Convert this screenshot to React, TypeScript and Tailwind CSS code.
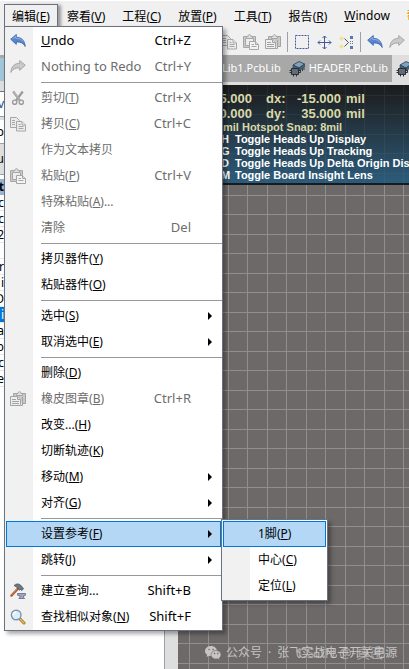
import {Fragment, type ReactNode} from 'react'

type Item = {
    label: string
    hotkey?: string
    tail?: string
    keys?: string
    icon?: ReactNode
    disabled?: boolean
    submenu?: boolean
    active?: boolean
    latin?: boolean
}

const UndoIcon = () => (
    <svg className="w-4 h-4" viewBox="0 0 16 16">
        <path d="M.7 6.2 6.3 1.5v2.8c5 .1 8.4 2.6 8.9 9.2-1.7-3.3-4.3-4.7-8.9-4.6v2.5z" fill="#5b84cf" stroke="#3560ad" strokeWidth=".8" strokeLinejoin="round"/>
        <path d="M2.4 6 5.6 3.4v1.8c3.6 0 6 1 7.6 3.4" fill="none" stroke="#9bb9ea" strokeWidth=".8"/>
    </svg>
)

const RedoIcon = () => (
    <svg className="w-4 h-4" viewBox="0 0 16 16">
        <path d="M15.3 6.2 9.7 1.5v2.8C4.7 4.4 1.3 6.9.8 13.5c1.7-3.3 4.3-4.7 8.9-4.6v2.5z" fill="#c9c9c9" stroke="#a3a3a3" strokeWidth=".9" strokeLinejoin="round"/>
    </svg>
)

const CutIcon = () => (
    <svg className="w-4 h-4" viewBox="0 0 16 16" fill="none" stroke="#9b9b9b">
        <path d="m3.2 1.5 6.7 9M12.8 1.5l-6.7 9" strokeWidth="2.2"/>
        <path d="m3.8 2 5.7 7.8" stroke="#cfcfcf" strokeWidth=".7"/>
        <circle cx="4.7" cy="12.2" r="2.1" strokeWidth="1.4"/>
        <circle cx="11.3" cy="12.2" r="2.1" strokeWidth="1.4"/>
    </svg>
)

const CopyIcon = () => (
    <svg className="w-4 h-4" viewBox="0 0 16 16" fill="#ebebeb" stroke="#a6a6a6">
        <path d="M.5 1.5h6l3 3v7h-9z"/>
        <path d="M2 4.5h3M2 6.5h3M2 8.5h3"/>
        <path d="M6.5 5.5H12L15.5 9v6h-9z"/>
        <path d="M12 5.5V9h3.5M8.5 8.5h2M8.5 10.5h5M8.5 12.5h5"/>
    </svg>
)

const PasteIcon = () => (
    <svg className="w-4 h-4" viewBox="0 0 16 16" fill="#dcdcdc" stroke="#a6a6a6">
        <path d="M.5 2.5h12v11H.5z" fill="#c9c9c9"/>
        <path d="M2.5 4.5h8v7h-8z" fill="#ececec"/>
        <path d="M3.5 3.5v-1H5c0-2.6 3-2.6 3 0h1.5v2h-6z"/>
        <path d="M6.5 7.500h6l3 3v5h-9z" fill="#f3f3f3"/>
        <path d="M8.5 10.500H11M8.5 12.500h5M12.5 7.500v3h3"/>
    </svg>
)

const StampIcon = () => (
    <svg className="w-4 h-4" viewBox="0 0 16 16" fill="#e2e2e2" stroke="#a3a3a3">
        <path d="M3.5 2.5h12v10h-12z" fill="#c9c9c9"/>
        <path d="M6.5 3.5v-1H8c0-2.400 3-2.400 3 0h1.5v2h-6z"/>
        <path d="M.5 5.5h7l3 3v6H.5z" fill="#efefef"/>
        <path d="M2 8.5h4M2 10.5h7M2 12.5h7M7.5 5.5v3h3M12.5 6v8.5h-2"/>
    </svg>
)

const HammerIcon = () => (
    <svg className="w-4 h-4" viewBox="0 0 16 16">
        <path d="m1.5 12.5 6.5-7" stroke="#a84e25" strokeWidth="2.4" strokeLinecap="round"/>
        <path d="m1.5 12 6-6.5" stroke="#e7a06c" strokeWidth=".8"/>
        <path d="M4 2.5C6 .5 8.5.4 10.5 2l3 3.500-1.500 2-1.500-1-1 .8L6.500 4z" fill="#6c7680" stroke="#444d55" strokeWidth=".7"/>
        <path d="M7.5 10.5h8v1.700l-2 .8v1.200l1.200 1.300H8.800l1.200-1.300V13l-2.500-.8z" fill="#9ea3c2" stroke="#646882" strokeWidth=".8"/>
    </svg>
)

const SearchIcon = () => (
    <svg className="w-4 h-4" viewBox="0 0 16 16">
        <path d="m10 10 4 4" stroke="#9b6b22" strokeWidth="3" strokeLinecap="round"/>
        <path d="m10 10 4 4" stroke="#f0bd50" strokeWidth="1.5" strokeLinecap="round"/>
        <circle cx="6.2" cy="6" r="4.8" fill="#d9eefb" stroke="#7d93ad" strokeWidth="1.4"/>
        <path d="M3.2 6a3 3 0 0 1 3-3" fill="none" stroke="#fff" strokeWidth="1.3"/>
    </svg>
)

const SelectIcon = () => (
    <svg className="w-4 h-4" viewBox="0 0 16 16">
        <path d="M1.5 1.5h13v13h-13z" fill="none" stroke="#4057a0" strokeDasharray="2 1"/>
    </svg>
)

const MoveIcon = () => (
    <svg className="w-4 h-4" viewBox="0 0 16 16" fill="none" stroke="#44589c">
        <path d="M8.5 2v13M2 8.5h13M6.5 4l2-2 2 2M6.5 13l2 2 2-2M4 6.5l-2 2 2 2M13 6.5l2 2-2 2"/>
    </svg>
)

const ClearFilterIcon = () => (
    <svg className="w-4 h-4" viewBox="0 0 16 16">
        <path d="M3.5 2v5M1 4.5h5M3.5 10v5M1 12.5h5M2 3l3 3m0-3L2 6m0 5 3 3m0-3-3 3" stroke="#eee59a"/>
        <path d="m6.5 4.5 4 4-4 4" fill="none" stroke="#555"/>
        <path d="M12 2h3v3h-3zM12 12h3v3h-3z" fill="#557cad"/>
        <path d="M12.5 7v3.500M14.5 7v3.500" stroke="#777" strokeDasharray="1 1"/>
    </svg>
)

const ChipIcon = () => (
    <svg className="w-4 h-4 shrink-0" viewBox="0 0 16 16">
        <path d="m4 4 6-3.5L15.5 3 10 7z" fill="#7ca4c2" stroke="#293b49" strokeWidth=".8"/>
        <path d="m4 4 6 3v3L4 7zM10 7l5.500-4v3L10 10z" fill="#496172" stroke="#293b49" strokeWidth=".6"/>
        <path d="M11.5 9v2.500M13.500 7.500V10M15 6.500V9" stroke="#2f3f4b"/>
        <path d="M2.5 7.500h7v6h-7z" fill="#626b75" stroke="#292e35"/>
        <path d="M.5 9.500h2M.5 11.500h2M9.500 9.500h2M9.500 11.500h2M4.500 13.500v2M7.500 13.500v2" stroke="#292e35"/>
    </svg>
)

const WeChatIcon = () => (
    <svg className="w-4 h-4" viewBox="0 0 16 16">
        <path d="M6 1C2.700 1 0 3.200 0 6c0 1.600.8 2.900 2.100 3.800L1.600 12l2.300-1.300c.7.2 1.400.3 2.100.3C9.300 11 12 8.800 12 6S9.300 1 6 1z" fill="#c6c4c4"/>
        <path d="M11 5.500c-2.900 0-5 1.900-5 4.200S8.100 14 11 14c.6 0 1.200-.1 1.700-.3l2 1.100-.5-1.900c1.100-.8 1.800-1.900 1.800-3.200 0-2.300-2.100-4.200-5-4.200z" fill="#c6c4c4" stroke="#6d6968" strokeWidth=".6"/>
        <path d="M4 4.500h.1M8 4.500h.1M9.500 8.500h.1M12.700 8.500h.1" stroke="#6d6968" strokeWidth="1.5" strokeLinecap="round"/>
    </svg>
)

const menus = [
    {label: '编辑', hotkey: 'E'},
    {label: '察看', hotkey: 'V'},
    {label: '工程', hotkey: 'C'},
    {label: '放置', hotkey: 'P'},
    {label: '工具', hotkey: 'T'},
    {label: '报告', hotkey: 'R'},
]

const editGroups: Item[][] = [
    [
        {label: 'Undo', keys: 'Ctrl+Z', icon: <UndoIcon/>, latin: true},
        {label: 'Nothing to Redo', keys: 'Ctrl+Y', icon: <RedoIcon/>, disabled: true, latin: true},
    ],
    [
        {label: '剪切', hotkey: 'T', keys: 'Ctrl+X', icon: <CutIcon/>, disabled: true},
        {label: '拷贝', hotkey: 'C', keys: 'Ctrl+C', icon: <CopyIcon/>, disabled: true},
        {label: '作为文本拷贝', disabled: true},
        {label: '粘贴', hotkey: 'P', keys: 'Ctrl+V', icon: <PasteIcon/>, disabled: true},
        {label: '特殊粘贴', hotkey: 'A', tail: '...', disabled: true},
        {label: '清除', keys: 'Del', disabled: true},
    ],
    [
        {label: '拷贝器件', hotkey: 'Y'},
        {label: '粘贴器件', hotkey: 'O'},
    ],
    [
        {label: '选中', hotkey: 'S', submenu: true},
        {label: '取消选中', hotkey: 'E', submenu: true},
    ],
    [
        {label: '删除', hotkey: 'D'},
        {label: '橡皮图章', hotkey: 'B', keys: 'Ctrl+R', icon: <StampIcon/>, disabled: true},
        {label: '改变...', hotkey: 'H'},
        {label: '切断轨迹', hotkey: 'K'},
        {label: '移动', hotkey: 'M', submenu: true},
        {label: '对齐', hotkey: 'G', submenu: true},
    ],
    [
        {label: '设置参考', hotkey: 'F', submenu: true, active: true},
        {label: '跳转', hotkey: 'J', submenu: true},
    ],
    [
        {label: '建立查询...', keys: 'Shift+B', icon: <HammerIcon/>},
        {label: '查找相似对象', hotkey: 'N', keys: 'Shift+F', icon: <SearchIcon/>},
    ],
]

const referenceItems: Item[] = [
    {label: '1脚', hotkey: 'P', active: true},
    {label: '中心', hotkey: 'C'},
    {label: '定位', hotkey: 'L'},
]

const hudKeys = [
    ['H', 'Toggle Heads Up Display'],
    ['G', 'Toggle Heads Up Tracking'],
    ['D', 'Toggle Heads Up Delta Origin Display'],
    ['M', 'Toggle Board Insight Lens'],
]

const hudCoords = [
    ['5.000', 'dx:', '-15.000'],
    ['0.000', 'dy:', '35.000'],
]

const footprints = ['c', 'c', '2', '', 'r', 'i', 'D', 'i', 'a', 'b', 'c', 'e']

function Label({item}: { item: Item }) {
    if (item.latin) {
        return item.label === 'Undo' ? <span><u>U</u>ndo</span> : <span>{item.label}</span>
    }
    return (
        <span>
            {item.label}
            {item.hotkey && <>(<u>{item.hotkey}</u>)</>}
            {item.tail}
        </span>
    )
}

function MenuRow({item}: { item: Item }) {
    return (
        <button
            type="button"
            role="menuitem"
            disabled={item.disabled}
            className={`flex items-center h-[26px] w-full border pr-2 text-left whitespace-nowrap ${item.active ? 'bg-[#b3d7f5] border-[#0078d7]' : 'border-transparent'} ${item.disabled ? 'text-[#6d6d6d]' : 'text-black'}`}
        >
            <span className="w-[34px] shrink-0 pl-[3px]">{item.icon}</span>
            <span className={`flex-1 ${item.latin ? 'text-[13px]' : 'text-xs'}`}><Label item={item}/></span>
            <span className="text-[13px]">{item.keys}</span>
            <span className="w-[21px] flex justify-end">
                {item.submenu && (
                    <svg className="w-1 h-2" viewBox="0 0 4 8">
                        <path d="M0 0v8l4-4z"/>
                    </svg>
                )}
            </span>
        </button>
    )
}

function SidePanel() {
    return (
        <aside className="w-[164px] shrink-0 bg-white text-xs text-black">
            <div className="h-[3px] bg-[#a8a8a8]"/>
            <div className="h-[23px] bg-[#a1c6da]"/>
            <div className="h-[10px] bg-[#dedede]"/>
            <div className="h-[25px] w-1 flex items-center justify-end overflow-hidden border-t border-gray-500 text-[#174b83]">v</div>
            <div className="h-1 bg-[#dedede] border-t border-gray-400"/>
            <div className="h-[23px] w-1 flex items-center justify-end overflow-hidden">p</div>
            <div className="h-8 w-1 flex items-center justify-end overflow-hidden bg-[#dedede] border-y border-gray-400">u</div>
            <div className="h-1"/>
            <div className="h-4 w-1 flex items-center justify-end overflow-hidden bg-[#99b4d1] font-bold">t</div>
            {footprints.map((name, i) => (
                <div
                    key={i}
                    className={`h-4 w-1 flex items-center justify-end overflow-hidden border-b border-gray-200 ${i === 7 ? 'bg-[#0078d7] text-white' : ''}`}
                >
                    {name}
                </div>
            ))}
        </aside>
    )
}

function BoardGrid() {
    const lines = Array.from({length: 60}, (_, i) => Math.floor(i * 19.5))
    return (
        <svg className="absolute inset-0 w-full h-full" shapeRendering="crispEdges">
            <g fill="#928e90">
                {lines.map((n) => (
                    <Fragment key={n}>
                        <rect x={n + 11} y="0" width="1" height="100%"/>
                        <rect x="0" y={n + 10} width="100%" height="1"/>
                    </Fragment>
                ))}
            </g>
        </svg>
    )
}

function HeadsUp() {
    return (
        <div className="relative h-[100px] overflow-hidden border-b-2 border-[#171b1e] bg-linear-to-b from-[#1b1c1d] to-[#2b5c7b] pt-[6px] pl-[38px] font-['Liberation_Sans',sans-serif] font-bold whitespace-nowrap">
            <div className="absolute inset-0 opacity-10"><BoardGrid/></div>
            <div className="relative text-[13px] leading-[15px] text-[#d9d9a8]">
                {hudCoords.map(([pos, axis, delta]) => (
                    <div key={axis} className="flex">
                        <span className="w-9 text-right">{pos}</span>
                        <span className="w-7 ml-[14px]">{axis}</span>
                        <span className="w-[47px] text-right">{delta}</span>
                        <span className="ml-[5px]">mil</span>
                    </div>
                ))}
            </div>
            <div className="relative pl-[5px] text-[11px] leading-3 text-white">
                <div className="pl-[2px] text-[#d9d9a8]">mil Hotspot Snap: 8mil</div>
                {hudKeys.map(([key, text]) => (
                    <div key={key} className="flex"><span className="w-[14px] shrink-0">{key}</span><span>{text}</span></div>
                ))}
            </div>
        </div>
    )
}

export default function App() {
    return (
        <div className="relative flex flex-col h-screen overflow-hidden bg-[#f0f0f0] font-['Noto_Sans','Noto_Sans_CJK_SC',sans-serif] text-xs text-black">
            <nav className="flex gap-px h-7 shrink-0 pt-[3px] pl-1 border-t border-white whitespace-nowrap">
                {menus.map((menu, i) => (
                    <button
                        key={menu.label}
                        type="button"
                        className={`shrink-0 px-[7px] border border-b-0 ${i === 0 ? 'border-gray-500 shadow-[3px_1px_3px_#999]' : 'border-transparent'}`}
                    >
                        {menu.label}(<u>{menu.hotkey}</u>)
                    </button>
                ))}
                <button type="button" className="shrink-0 px-2"><u>W</u>indow</button>
                <button type="button" className="shrink-0 px-2 text-[#e58a00]">帮助</button>
            </nav>

            <div className="flex items-center h-[27px] shrink-0 pl-[221px] gap-[6px]">
                <CopyIcon/>
                <PasteIcon/>
                <StampIcon/>
                <span className="w-px h-5 bg-gray-400"/>
                <SelectIcon/>
                <MoveIcon/>
                <ClearFilterIcon/>
                <span className="w-px h-5 bg-gray-400"/>
                <UndoIcon/>
                <RedoIcon/>
            </div>

            <div className="flex flex-1 min-h-0">
                <SidePanel/>
                <div className="w-[14px] shrink-0 border-l border-gray-400 bg-[#dedede]"/>
                <main className="flex flex-col flex-1 min-w-0">
                    <div className="flex h-[27px] shrink-0 bg-[#a8a8a8] pl-10 text-[11px] text-white whitespace-nowrap">
                        <button type="button" className="shrink-0 pl-1 pr-2">Lib1.PcbLib</button>
                        <button type="button" className="flex items-center gap-1 shrink-0 pr-1"><ChipIcon/>HEADER.PcbLib</button>
                        <button type="button" className="flex items-center flex-1 bg-[#dedede] pl-1"><ChipIcon/></button>
                    </div>
                    <div className="h-[3px] shrink-0 bg-[#dedede]"/>
                    <HeadsUp/>
                    <div className="relative flex-1 bg-[#6d6968]">
                        <BoardGrid/>
                        <div className="absolute left-[27px] right-0 bottom-2 flex items-center text-xs text-[#c6c4c4] whitespace-nowrap">
                            <WeChatIcon/>
                            <span className="flex gap-[6px] pl-[5px]">
                                <span>公众号</span>
                                <span>·</span>
                                <span>张飞实战电子开关电源</span>
                            </span>
                            <span className="absolute left-[93px] text-sm text-[#c6c4c4]/70">CSDN @-真密-</span>
                        </div>
                    </div>
                </main>
            </div>

            <div role="menu" className="absolute left-1 top-[26px] w-[219px] border border-gray-500 bg-linear-to-r from-[#f1f1f1] from-[28px] to-white to-[28px] p-px pb-0 shadow-[3px_3px_4px_#0005]">
                {editGroups.map((group, i) => (
                    <Fragment key={i}>
                        {i > 0 && <div className="h-[5px] ml-[35px] -mr-px py-[2px]"><div className="h-px bg-[#989898]"/></div>}
                        {group.map((item) => <MenuRow key={item.label} item={item}/>)}
                    </Fragment>
                ))}
            </div>

            <div role="menu" className="absolute left-[221px] top-[519px] w-[107px] border border-gray-500 bg-linear-to-r from-[#f1f1f1] from-[28px] to-white to-[28px] p-px shadow-[3px_3px_4px_#0005]">
                {referenceItems.map((item) => <MenuRow key={item.label} item={item}/>)}
            </div>
        </div>
    )
}
